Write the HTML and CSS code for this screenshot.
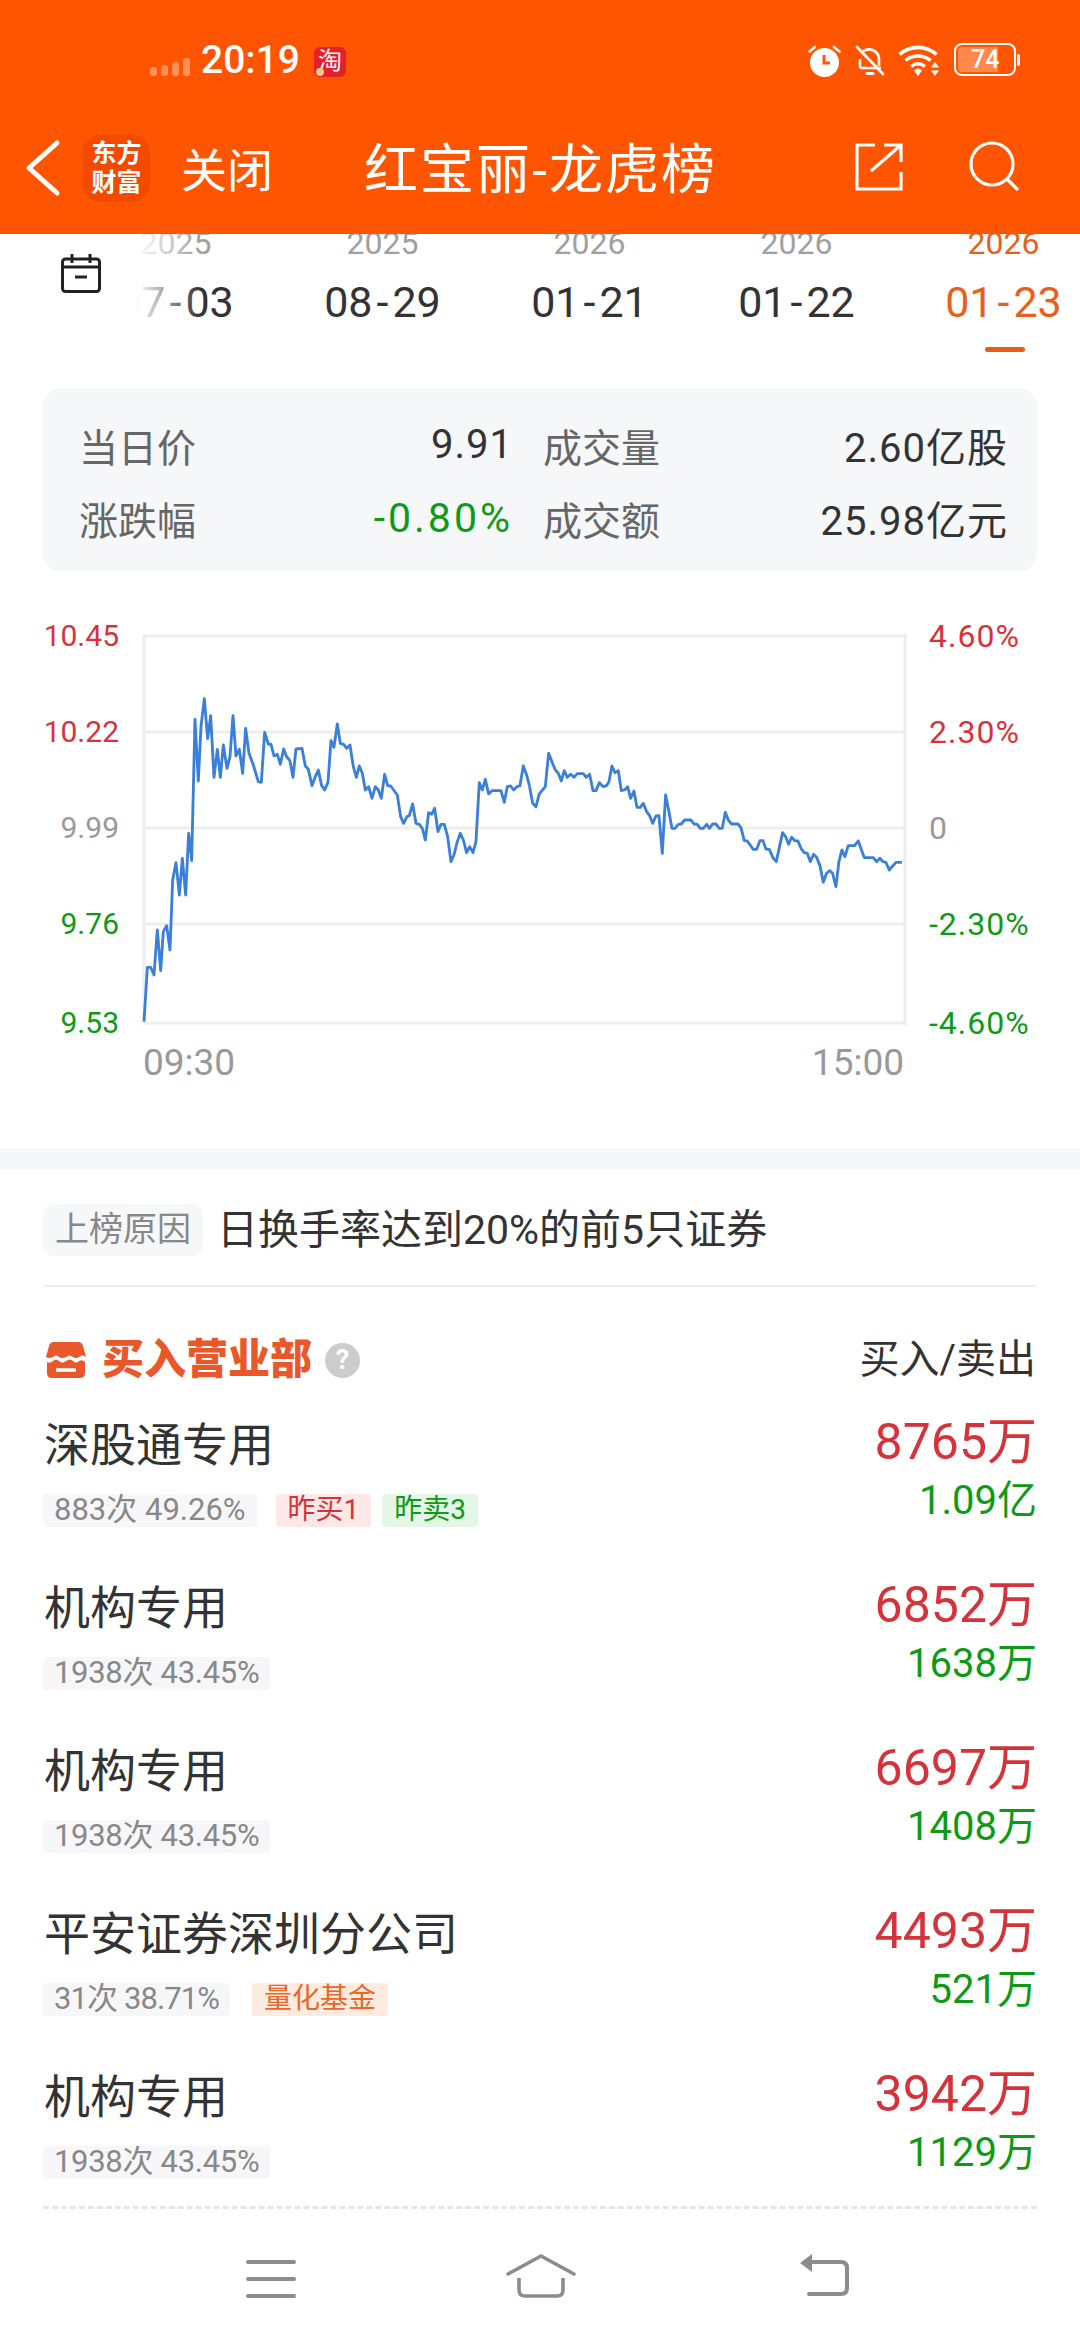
FILE: index.html
```html
<!DOCTYPE html>
<html lang="zh-CN">
<head>
  <meta charset="UTF-8">
  <meta name="viewport" content="width=device-width, initial-scale=1.0">
  <title>红宝丽-龙虎榜</title>
  <link rel="stylesheet" href="styles.css">
</head>

<body>
  <!-- Orange header -->
  <header class="header">
    <div class="status-bar">
      <div class="status-left">
        <div class="signal"><i class="b1"></i><i class="b2"></i><i class="b3"></i><i class="b4"></i></div>
        <span class="clock">20:19</span>
        <span class="tb-icon">淘</span>
      </div>
      <div class="status-right">
        <svg class="ic-alarm" width="33" height="32" viewBox="0 0 33 32">
          <circle cx="16.500" cy="17.500" r="14.500" fill="#fff"/>
          <path d="M16 10v8h6" fill="none" stroke="#ff5500" stroke-width="3"/>
          <path d="M1.500 6.500 7 2M31.500 6.500 26 2" fill="none" stroke="#fff" stroke-width="2.500" stroke-linecap="round"/>
        </svg>
        <svg class="ic-bell" width="30" height="32" viewBox="0 0 30 32">
          <path d="M5 23h21M5 23V14M8 6.500A10 10 0 0 1 24 13.500V21" fill="none" stroke="#fff" stroke-width="2.600"/>
          <path d="M12 28.500h6" stroke="#fff" stroke-width="3" stroke-linecap="round"/>
          <path d="M2 2l26 27" stroke="#fff" stroke-width="2.600" stroke-linecap="round"/>
        </svg>
        <svg class="ic-wifi" width="42" height="32" viewBox="0 0 42 32">
          <path d="M1.500 9.500C12 0 28 0 38.500 9.500" fill="none" stroke="#fff" stroke-width="3.600"/>
          <path d="M7.500 15.500C14.500 9.500 25.500 9.500 32.500 15.500" fill="none" stroke="#fff" stroke-width="3.600"/>
          <path d="M13 21.500C17.500 18 22.500 18 27 21.500" fill="none" stroke="#fff" stroke-width="3.400"/>
          <path d="M16 25.500 20 23 24 25.500 20 31z" fill="#fff"/>
          <path d="M33 22.500 37 17 41 22.500zM33 25.500h8L37 31z" fill="#fff"/>
        </svg>
        <div class="battery">
          <div class="battery-body"><div class="battery-fill"></div><span>74</span></div>
          <div class="battery-tip"></div>
        </div>
      </div>
    </div>
    <div class="title-bar">
      <svg class="ic-back" width="36" height="58" viewBox="0 0 36 58">
        <path d="M32 4 4 29l28 25" fill="none" stroke="#fff" stroke-width="5" stroke-linecap="round" stroke-linejoin="round"/>
      </svg>
      <div class="app-icon"><span>东方</span><span>财富</span></div>
      <span class="close">关闭</span>
      <h1 class="page-title">红宝丽-龙虎榜</h1>
      <svg class="ic-share" width="48" height="48" viewBox="0 0 48 48">
        <path d="M20 2H2v44h44V29M16 28 46 2M29 2h17v17" fill="none" stroke="#fff" stroke-width="3.200"/>
      </svg>
      <svg class="ic-search" width="50" height="50" viewBox="0 0 50 50">
        <circle cx="23" cy="23" r="21" fill="none" stroke="#fff" stroke-width="3.200"/>
        <path d="M39 39l9 9" stroke="#fff" stroke-width="3.200" stroke-linecap="round"/>
      </svg>
    </div>
  </header>

  <!-- Date strip -->
  <section class="date-strip">
    <ul class="date-list">
      <li class="date-item"><span class="year">2025</span><span class="day">07<b>-</b>03</span></li>
      <li class="date-item"><span class="year">2025</span><span class="day">08<b>-</b>29</span></li>
      <li class="date-item"><span class="year">2026</span><span class="day">01<b>-</b>21</span></li>
      <li class="date-item"><span class="year">2026</span><span class="day">01<b>-</b>22</span></li>
      <li class="date-item active"><span class="year">2026</span><span class="day">01<b>-</b>23</span><i class="mark"></i></li>
    </ul>
    <div class="date-fade">
      <svg width="40" height="40" viewBox="0 0 40 40">
        <rect x="1.500" y="6" width="37" height="32.500" rx="3" fill="none" stroke="#222" stroke-width="3"/>
        <path d="M1.500 14h37M11 1v9M29 1v9M14 24h12" fill="none" stroke="#222" stroke-width="3"/>
      </svg>
    </div>
  </section>

  <!-- Day summary -->
  <section class="summary">
    <div class="summary-cell"><span class="label">当日价</span><span class="val">9.91</span></div>
    <div class="summary-cell"><span class="label">成交量</span><span class="val">2.60亿股</span></div>
    <div class="summary-cell"><span class="label">涨跌幅</span><span class="val green">-0.80%</span></div>
    <div class="summary-cell"><span class="label">成交额</span><span class="val">25.98亿元</span></div>
  </section>

  <!-- Intraday chart -->
  <section class="chart">
    <div class="axis axis-left">
      <span class="red">10.45</span>
      <span class="red">10.22</span>
      <span class="gray">9.99</span>
      <span class="green">9.76</span>
      <span class="green">9.53</span>
    </div>
    <svg class="plot" width="766" height="423" viewBox="0 0 766 423">
      <path d="M2 18H763M2 114H763M2 210H763M2 306H763M2 405H763M2 16V407M763 16V407" fill="none" stroke="#eeeeee" stroke-width="3"/>
      <g transform="translate(-12 2) scale(.3333)" fill="none" stroke="#3a7fd8" stroke-width="8.500" stroke-linejoin="round">
        <polyline points="42,1205 52,1042 62,1042 72,1065 82,930 92,1052 100,935 110,917 120,990 128,780 138,728 148,825 157,715 167,825 176,640 185,722 195,298 205,483 213,320 223,236 233,356 242,287 252,472 262,388 271,472 280,375 291,445 300,410 309,287 318,408 328,388 338,460 347,325 357,400 370,435 385,485 394,487 404,337 415,372 423,373 432,408 442,403 451,433 461,387 470,410 480,423 489,472 498,387 516,385 526,438 535,448 546,497 556,470 565,450 575,497 584,510 594,487 603,362 612,382 622,312 631,370 641,373 650,385 660,375 670,440 679,472 688,438 697,460 706,510 716,500 726,535 736,500 745,510 754,535 764,463 773,497 782,498 802,525 812,590 821,610 831,590 838,587 848,552 858,610 868,613 877,625 886,660 896,578 905,583 914,565 924,635 933,613 943,613 953,650 963,725 972,705 982,665 991,640 1000,660 1010,698 1019,680 1029,698 1038,665 1048,488 1057,510 1066,478 1076,522 1086,512 1113,512 1123,547 1132,500 1142,498 1151,510 1161,500 1170,497 1180,438 1190,465 1199,500"/>
        <polyline transform="translate(1170 0)" points="29,500 38,550 48,560 58,522 76,500 86,400 105,448 115,460 124,483 133,452 142,472 152,463 162,472 172,461 190,461 199,472 209,463 219,512 228,512 238,488 250,500 260,497 267,485 276,438 285,458 295,452 304,512 314,510 323,500 332,535 342,513 351,562 361,562 370,550 380,575 389,587 398,610 408,588 417,587 427,700 437,525 447,575 456,625 465,625 475,613 484,612 494,600 513,600 522,612 532,613 541,625 550,625 560,613 569,625 578,612 588,612 598,625 607,625 616,577 625,600 635,612 654,612 663,623 673,662 682,663 700,688 710,688 720,662 729,662 738,687 748,688 760,715 769,725 788,638 797,650 806,673 815,652 825,662 834,663 844,687 853,698 862,700 871,725 881,703 890,712 900,737 910,787 920,760 929,752 938,760 948,800 957,725 966,690 975,710 985,677 1004,677 1015,663 1033,713 1060,713 1070,725 1080,715 1089,725 1098,727 1108,750 1128,727 1146,727"/>
      </g>
    </svg>
    <div class="axis axis-right">
      <span class="red">4.60%</span>
      <span class="red">2.30%</span>
      <span class="gray">0</span>
      <span class="green">-2.30%</span>
      <span class="green">-4.60%</span>
    </div>
    <div class="times"><span>09:30</span><span>15:00</span></div>
  </section>

  <div class="band"></div>

  <!-- Why it is listed -->
  <section class="reason">
    <span class="reason-tag">上榜原因</span>
    <span class="reason-text">日换手率达到20%的前5只证券</span>
  </section>

  <!-- Buying branches -->
  <section class="branches">
    <div class="branches-head">
      <svg class="ic-store" width="40" height="36" viewBox="0 0 40 36">
        <path d="M8 0H32Q36 0 37 4L40 15Q37 12 33 15 30 17 27 15 24 12 20 15 16 17 13 15 10 12 7 15 3 17 0 15L3 4Q4 0 8 0Z" fill="#e8582a"/>
        <path d="M1 20Q4 22 7 19 10 16 13 19 16 22 20 19 24 16 27 19 30 22 33 19 36 17 39 20V31Q39 36 34 36H6Q1 36 1 31Z" fill="#e8582a"/>
        <path d="M10 28H30" stroke="#fff" stroke-width="3.500"/>
      </svg>
      <span class="branches-title">买入营业部</span>
      <span class="help">?</span>
      <span class="branches-right">买入/卖出</span>
    </div>

    <div class="rows">
      <div class="row">
        <div class="row-left">
          <div class="name">深股通专用</div>
          <div class="tags"><span class="tag">883次 49.26%</span><span class="tag tag-red">昨买1</span><span class="tag tag-green">昨卖3</span></div>
        </div>
        <div class="row-right"><div class="buy">8765万</div><div class="sell">1.09亿</div></div>
      </div>
      <div class="row">
        <div class="row-left">
          <div class="name">机构专用</div>
          <div class="tags"><span class="tag tag-slim">1938次 43.45%</span></div>
        </div>
        <div class="row-right"><div class="buy">6852万</div><div class="sell">1638万</div></div>
      </div>
      <div class="row">
        <div class="row-left">
          <div class="name">机构专用</div>
          <div class="tags"><span class="tag tag-slim">1938次 43.45%</span></div>
        </div>
        <div class="row-right"><div class="buy">6697万</div><div class="sell">1408万</div></div>
      </div>
      <div class="row">
        <div class="row-left">
          <div class="name">平安证券深圳分公司</div>
          <div class="tags"><span class="tag tag-tight">31次 38.71%</span><span class="tag tag-orange">量化基金</span></div>
        </div>
        <div class="row-right"><div class="buy">4493万</div><div class="sell">521万</div></div>
      </div>
      <div class="row">
        <div class="row-left">
          <div class="name">机构专用</div>
          <div class="tags"><span class="tag tag-slim">1938次 43.45%</span></div>
        </div>
        <div class="row-right"><div class="buy">3942万</div><div class="sell">1129万</div></div>
      </div>
    </div>
    <div class="dash-line"></div>
  </section>

  <!-- System navigation -->
  <nav class="sys-nav">
    <svg class="nav-menu" width="50" height="42" viewBox="0 0 50 42">
      <path d="M2 5H48M2 22H48M2 39H48" stroke="#8c8c8c" stroke-width="4" stroke-linecap="round"/>
    </svg>
    <svg class="nav-home" width="70" height="44" viewBox="0 0 70 44">
      <path d="M2 20 35 2 68 20" fill="none" stroke="#8c8c8c" stroke-width="3.600" stroke-linecap="round" stroke-linejoin="round"/>
      <path d="M13 24V36Q13 42 19 42H51Q57 42 57 36V24" fill="none" stroke="#8c8c8c" stroke-width="3.600"/>
    </svg>
    <svg class="nav-back" width="50" height="42" viewBox="0 0 50 42">
      <path d="M1 9 13 0V18Z" fill="#8c8c8c"/>
      <path d="M8 8H42Q48 8 48 14V34Q48 40 42 40H10" fill="none" stroke="#8c8c8c" stroke-width="4" stroke-linecap="round"/>
    </svg>
  </nav>
</body>
</html>
```

FILE: styles.css
```css
/* Reset & General */
* {
  margin: 0;
  padding: 0;
  box-sizing: border-box;
}

body {
  width: 1080px;
  height: 2340px;
  overflow: hidden;
  display: flex;
  flex-direction: column;
  background-color: #ffffff;
  color: #333333;
  font-family: Roboto, "Noto Sans CJK SC", sans-serif;
}

.red { color: #d5333b; }
.green { color: #0e9a16; }
.gray { color: #999999; }

/* Header */
.header {
  height: 234px;
  flex: none;
  background-color: #ff5500;
  color: white;
  position: relative;
  z-index: 2;
}

.status-bar {
  height: 120px;
  padding: 42px 60px 0 150px;
  display: flex;
  justify-content: space-between;
  align-items: flex-start;
}

.status-left {
  display: flex;
  align-items: center;
  height: 36px;
}

.signal {
  display: flex;
  align-items: flex-end;
  gap: 4px;
  height: 18px;
  margin-top: 14px;
}

.signal i {
  width: 7px;
  background-color: rgba(255, 255, 255, 0.35);
  border-radius: 3px;
}

.signal .b1 { height: 9px; }
.signal .b2 { height: 11px; }
.signal .b3 { height: 14px; }
.signal .b4 { height: 18px; }

.clock {
  margin-left: 11px;
  font-size: 39px;
  font-weight: 500;
  line-height: 36px;
}

.tb-icon {
  width: 32px;
  height: 30px;
  margin-left: 14px;
  margin-top: 3px;
  border-radius: 6px;
  background-color: #e3202c;
  font-size: 24px;
  line-height: 28px;
  text-align: center;
  position: relative;
  overflow: hidden;
}

/* small gold coin in the corner of the app icon */
.tb-icon::after {
  content: "";
  position: absolute;
  left: 2px;
  bottom: 1px;
  width: 8px;
  height: 8px;
  border-radius: 50%;
  background-color: #f7c98a;
}

.status-right {
  display: flex;
  align-items: center;
}

.ic-alarm { margin-top: 3px; }
.ic-bell { margin: 3px 0 0 14px; }
.ic-wifi { margin: 3px 0 0 13px; }

.battery {
  display: flex;
  align-items: center;
  margin-left: 14px;
}

.battery-body {
  width: 62px;
  height: 33px;
  border: 2px solid #ffffff;
  border-radius: 8px;
  padding: 2px;
  position: relative;
}

.battery-fill {
  width: 74%;
  height: 100%;
  background-color: rgba(255, 255, 255, 0.3);
  border-radius: 4px 0 0 4px;
}

.battery-body span {
  position: absolute;
  left: 15px;
  top: 0;
  font-size: 25px;
  font-weight: 500;
  line-height: 29px;
}

.battery-tip {
  width: 3px;
  height: 12px;
  margin-left: 1px;
  background-color: #ffffff;
  border-radius: 0 2px 2px 0;
}

.title-bar {
  display: flex;
  align-items: center;
  height: 96px;
}

.ic-back { margin-left: 25px; }

.app-icon {
  width: 67px;
  height: 67px;
  margin-left: 22px;
  border-radius: 18px;
  background-color: #f24a00;
  display: flex;
  flex-direction: column;
  align-items: center;
  justify-content: center;
  font-size: 25px;
  font-weight: 700;
  line-height: 29px;
}

.close {
  margin-left: 31px;
  font-size: 46px;
  margin-top: -2px;
}

.page-title {
  margin-left: 91px;
  margin-top: -5px;
  font-size: 54px;
  font-weight: 400;
  letter-spacing: 2px;
  white-space: nowrap;
}

.ic-share { position: absolute; left: 855px; top: 143px; }
.ic-search { position: absolute; left: 969px; top: 141px; }

/* Date Strip */
.date-strip {
  height: 130px;
  flex: none;
  position: relative;
  overflow: hidden;
}

.date-list {
  list-style: none;
  display: flex;
  margin-left: 72px;
  margin-top: -10px;
}

.date-item {
  width: 207px;
  flex: none;
  display: flex;
  flex-direction: column;
  align-items: center;
  position: relative;
}

.year {
  font-size: 32px;
  line-height: 38px;
  color: #a0a0a0;
}

.day {
  margin-top: 15px;
  font-size: 43px;
  line-height: 50px;
  color: #333333;
  white-space: nowrap;
}

.day b {
  font-weight: 400;
  margin: 0 4px;
}

.date-item.active .year,
.date-item.active .day {
  color: #e8601c;
}

.mark {
  width: 40px;
  height: 5px;
  margin-top: 20px;
  margin-left: 3px;
  border-radius: 3px;
  background-color: #ea5a1a;
}

/* Calendar icon sits over the scrolled dates */
.date-fade {
  position: absolute;
  left: 0;
  top: 0;
  width: 200px;
  height: 100%;
  padding: 19px 0 0 61px;
  background: linear-gradient(to right, #ffffff 68%, rgba(255, 255, 255, 0));
}

/* Summary Card */
.summary {
  margin: 24px 43px 0;
  height: 183px;
  flex: none;
  padding: 20px 29px 0 36px;
  border-radius: 18px;
  background-color: #f6f7f9;
  display: grid;
  grid-template-columns: 464px 1fr;
  grid-auto-rows: 73px;
}

.summary-cell {
  display: flex;
  justify-content: space-between;
  align-items: center;
  height: 73px;
}

.summary-cell:nth-child(odd) {
  width: 434px;
}

.label {
  font-size: 39px;
  color: #666666;
}

.val {
  font-size: 40px;
  letter-spacing: 1px;
  color: #333333;
}

.val.green {
  font-size: 41px;
  letter-spacing: 3px;
  color: #0e9a16;
}

/* Chart */
.chart {
  margin-top: 47px;
  display: grid;
  grid-template-columns: 142px 766px 1fr;
  padding-bottom: 63px;
}

.axis {
  display: grid;
  grid-template-rows: 96px 96px 96px 99px 36px;
  font-size: 30px;
  line-height: 36px;
}

.axis-left {
  padding-right: 23px;
  text-align: right;
}

.axis-right {
  padding-left: 21px;
  font-size: 32px;
  letter-spacing: 1px;
  white-space: nowrap;
}

.plot {
  display: block;
}

.times {
  grid-column: 2;
  display: flex;
  justify-content: space-between;
  padding: 0 4px 0 1px;
  font-size: 37px;
  line-height: 44px;
  color: #999999;
}

.band {
  height: 21px;
  flex: none;
  background-color: #f6f7f9;
}

/* Reason */
.reason {
  margin: 35px 43px 0;
  padding-bottom: 29px;
  border-bottom: 2px solid #eeeeee;
  display: flex;
  align-items: center;
  gap: 14px;
}

.reason-tag {
  height: 52px;
  padding: 0 12px;
  border-radius: 12px;
  background-color: #f6f7f9;
  color: #888888;
  font-size: 34px;
  line-height: 50px;
}

.reason-text {
  font-size: 41px;
  line-height: 52px;
  white-space: nowrap;
}

/* Buying Branches */
.branches {
  margin: 50px 43px 0;
}

.branches-head {
  display: flex;
  align-items: center;
  height: 46px;
  margin-bottom: 27px;
}

.ic-store {
  margin-left: 3px;
}

.branches-title {
  margin-left: 16px;
  font-size: 42px;
  font-weight: 900;
  line-height: 46px;
  color: #e8582a;
}

.help {
  width: 35px;
  height: 35px;
  margin-left: 13px;
  border-radius: 50%;
  background-color: #cccccc;
  color: white;
  font-size: 27px;
  font-weight: 700;
  line-height: 35px;
  text-align: center;
}

.branches-right {
  margin-left: auto;
  padding-right: 1px;
  font-size: 40px;
  line-height: 46px;
}

.rows {
  display: flex;
  flex-direction: column;
  gap: 46px;
}

.row {
  height: 117px;
  display: flex;
  justify-content: space-between;
}

.name {
  margin-top: 5px;
  margin-left: 1px;
  font-size: 46px;
  line-height: 60px;
}

.tags {
  display: flex;
  margin-top: 19px;
}

.tag {
  height: 33px;
  padding: 0 11px;
  border-radius: 4px;
  background-color: #f7f7f9;
  color: #888888;
  font-size: 31px;
  line-height: 32px;
  white-space: nowrap;
}

/* the reference's narrow "1" runs shorter than Roboto's */
.tag-slim { letter-spacing: -0.3px; }
.tag-tight { letter-spacing: -0.9px; }

.tag-red,
.tag-green,
.tag-orange {
  padding: 0 12px;
  font-size: 28px;
}

.tag-red {
  margin-left: 19px;
  background-color: #fde8e8;
  color: #d5333b;
}

.tag-green {
  margin-left: 11px;
  background-color: #e4f6e6;
  color: #0e9a16;
}

.tag-orange {
  margin-left: 22px;
  background-color: #fdebe0;
  color: #e8682a;
}

.row-right {
  padding-top: 2px;
  text-align: right;
}

.buy {
  font-size: 50px;
  line-height: 60px;
  color: #d5333b;
}

.sell {
  margin-top: 4px;
  font-size: 40px;
  line-height: 50px;
  color: #0e9a16;
}

.dash-line {
  margin-top: 27px;
  border-top: 3px dashed #e6e6e6;
}

/* System Navigation */
.sys-nav {
  display: flex;
  align-items: flex-start;
  margin-top: 45px;
  padding-left: 246px;
}

.nav-menu { margin-top: 3px; }
.nav-home { margin-left: 210px; }
.nav-back { margin-left: 223px; }
```
